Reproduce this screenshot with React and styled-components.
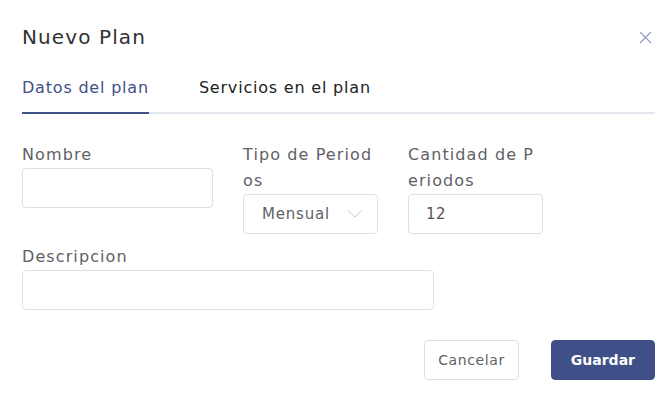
import React from 'react'
import styled, { createGlobalStyle } from 'styled-components'

const GlobalStyle = createGlobalStyle`
  html, body {
    margin: 0;
    padding: 0;
    background: #fff;
  }
  body {
    font-family: "DejaVu Sans", "Open Sans", sans-serif;
    color: #303133;
  }
  * { box-sizing: border-box; }
`

const Dialog = styled.div`
  width: 671px;
  padding: 23px 16px 27px 22px;
  background: #fff;
`

const Header = styled.div`
  display: flex;
  align-items: center;
  justify-content: space-between;
`

const Title = styled.h2`
  margin: 0;
  font-size: 20px;
  line-height: 28px;
  font-weight: 400;
  letter-spacing: 1.1px;
  color: #303133;
`

const CloseButton = styled.button`
  display: flex;
  align-items: center;
  justify-content: center;
  width: 20px;
  height: 20px;
  padding: 0;
  border: none;
  background: transparent;
  cursor: pointer;
`

const TabBar = styled.div`
  display: flex;
  gap: 50px;
  margin-top: 25px;
  border-bottom: 2px solid #e4e7ed;
`

const Tab = styled.div`
  padding-bottom: 12px;
  margin-bottom: -2px;
  font-size: 16px;
  line-height: 24px;
  letter-spacing: 0.8px;
  color: ${p => (p.$active ? '#3f5088' : '#222')};
  border-bottom: 2px solid ${p => (p.$active ? '#3f5088' : 'transparent')};
  cursor: pointer;
`

const Form = styled.div`
  display: flex;
  flex-direction: column;
  gap: 10px;
  margin-top: 28px;
`

const Row = styled.div`
  display: flex;
  align-items: flex-start;
  gap: 30px;
`

const Field = styled.div`
  width: ${p => p.$width}px;
  display: flex;
  flex-direction: column;
`

const Label = styled.label`
  font-size: 16px;
  line-height: 26px;
  letter-spacing: 1.1px;
  color: #5f6166;
  word-break: break-all;
`

const Input = styled.input`
  height: 40px;
  width: 100%;
  padding: 0 16px 0 17px;
  border: 1px solid #dcdfe6;
  border-radius: 4px;
  font-family: inherit;
  font-size: 15px;
  letter-spacing: 0.5px;
  color: #555;
  outline: none;
`

const Select = styled.div`
  height: 40px;
  display: flex;
  align-items: center;
  justify-content: space-between;
  padding: 0 14px 0 18px;
  border: 1px solid #dcdfe6;
  border-radius: 4px;
  font-size: 15px;
  letter-spacing: 0.8px;
  color: #606266;
`

const Footer = styled.div`
  display: flex;
  justify-content: flex-end;
  gap: 32px;
  margin-top: 30px;
`

const Button = styled.button`
  height: 40px;
  padding: 0 ${p => (p.$primary ? '19px' : '13px')};
  border-radius: 4px;
  border: 1px solid ${p => (p.$primary ? '#3f5088' : '#dcdfe6')};
  background: ${p => (p.$primary ? '#3f5088' : '#fff')};
  color: ${p => (p.$primary ? '#fff' : '#606266')};
  font-family: inherit;
  font-size: 14px;
  letter-spacing: ${p => (p.$primary ? '0' : '0.6px')};
  font-weight: ${p => (p.$primary ? 700 : 400)};
  cursor: pointer;
`

function CloseIcon() {
  return (
    <svg width="13" height="13" viewBox="0 0 13 13">
      <path d="M1 1L12 12M12 1L1 12" stroke="#8d9bc0" strokeWidth="1.1" fill="none" />
    </svg>
  )
}

function Chevron() {
  return (
    <svg width="16" height="8" viewBox="0 0 16 8">
      <polyline points="1,0.5 8,7 15,0.5" stroke="#c0c4cc" strokeWidth="0.9" fill="none" />
    </svg>
  )
}

export default function App() {
  return (
    <>
      <GlobalStyle />
      <Dialog>
        <Header>
          <Title>Nuevo Plan</Title>
          <CloseButton aria-label="Cerrar"><CloseIcon /></CloseButton>
        </Header>

        <TabBar>
          <Tab $active>Datos del plan</Tab>
          <Tab>Servicios en el plan</Tab>
        </TabBar>

        <Form>
          <Row>
            <Field $width={191}>
              <Label>Nombre</Label>
              <Input />
            </Field>
            <Field $width={135}>
              <Label>Tipo de Periodos</Label>
              <Select>
                <span>Mensual</span>
                <Chevron />
              </Select>
            </Field>
            <Field $width={135}>
              <Label>Cantidad de Periodos</Label>
              <Input defaultValue="12" />
            </Field>
          </Row>
          <Row>
            <Field $width={412}>
              <Label>Descripcion</Label>
              <Input />
            </Field>
          </Row>
        </Form>

        <Footer>
          <Button>Cancelar</Button>
          <Button $primary>Guardar</Button>
        </Footer>
      </Dialog>
    </>
  )
}
